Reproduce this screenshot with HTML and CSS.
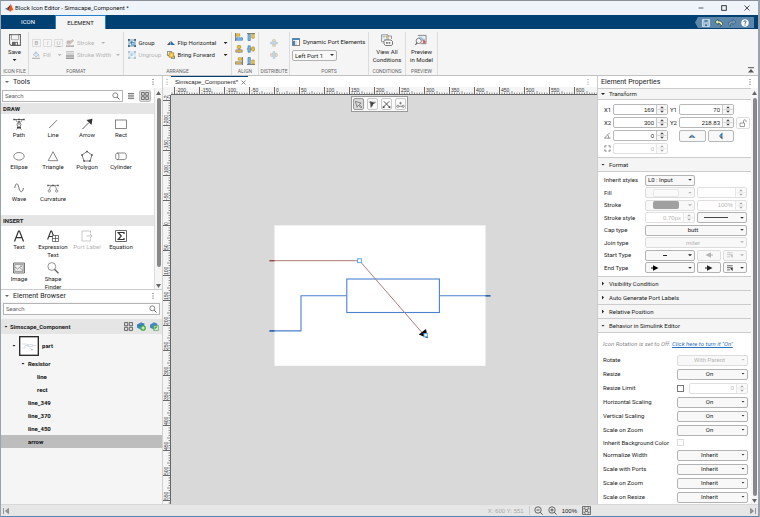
FILE: index.html
```html
<!DOCTYPE html>
<html lang="en">
<head>
<meta charset="utf-8">
<title>Block Icon Editor - Simscape_Component *</title>
<link rel="stylesheet" href="styles.css">
</head>
<body>
<svg class="defs" aria-hidden="true">
  <defs>
    <symbol id="search" viewBox="0 0 9 9"><circle cx="3.7" cy="3.7" r="2.8" fill="none" stroke="#555" stroke-width=".8"/><path d="M5.8 5.8L8.4 8.4" stroke="#555" stroke-width="1.1"/></symbol>
    <symbol id="dots" viewBox="0 0 2 6"><path d="M.5 0h1v1h-1zM.5 2.4h1v1h-1zM.5 4.8h1v1h-1z" fill="#555"/></symbol>
    <symbol id="grid4" viewBox="0 0 8 8"><path d="M.5.5h2.8v2.8H.5zM4.7.5h2.8v2.8H4.7zM.5 4.7h2.8v2.8H.5zM4.7 4.7h2.8v2.8H4.7z" fill="none" stroke="#555" stroke-width=".8"/></symbol>
    <symbol id="spin" viewBox="0 0 10 10"><path d="M0 5h10" stroke="#bbb" stroke-width=".6"/><path d="M3 3.600L5 1.300l2 2.300zM3 6.400L5 8.700l2-2.300z" fill="#444"/></symbol>
    <symbol id="arrowhead" viewBox="0 0 8 6"><path d="M0 2.500h2V.2L7.500 3 2 5.800V3.500H0z" fill="currentColor"/></symbol>
    <symbol id="lines" viewBox="0 0 8 8"><path d="M0 1h7.500M0 3.500h6M0 6.500h4" stroke="currentColor" stroke-width=".9" fill="none"/><path d="M4.500 5l3-2.500V8z" fill="currentColor"/></symbol>
  </defs>
</svg>

<header class="titlebar">
  <svg class="logo" viewBox="0 0 9 8"><path d="M0 4.7L3 3.2 4.3 5 2.6 6.3z" fill="#3f7fb5"/><path d="M3 3.2C4.3 2.7 4.8.5 5.7.2L4.5 5.6 2.8 6.2z" fill="#8c2b1c"/><path d="M5.7.2C6.8 1 7.4 5 9 6.5 7.3 5.7 6.4 6.3 5 8 4.5 7 4 6.4 2.8 6.3 4.5 5.4 5 2 5.7.2z" fill="#dc5a26"/></svg>
  <h1>Block Icon Editor - Simscape_Component *</h1>
  <div class="winbuttons">
    <button aria-label="Minimize"><svg viewBox="0 0 6 6"><path d="M.5 3h5" stroke="#222" stroke-width=".7"/></svg></button>
    <button aria-label="Maximize"><svg viewBox="0 0 6 6"><rect x=".7" y=".7" width="4.600" height="4.600" fill="none" stroke="#222" stroke-width=".9"/></svg></button>
    <button aria-label="Close"><svg viewBox="0 0 6 6"><path d="M.5.5l5 5M5.500.5l-5 5" stroke="#222" stroke-width=".8"/></svg></button>
  </div>
</header>

<nav class="tabs">
  <button class="tab">ICON</button>
  <button class="tab active">ELEMENT</button>
  <div class="quick">
    <button aria-label="Save"><svg viewBox="0 0 8 8"><path d="M.5.5h7v7h-7z" fill="#9dbad3" stroke="#dce8f2" stroke-width=".8"/><path d="M2 .8h4v2.400H2zM2.500 5h3v2.500h-3z" fill="#40719c" stroke="#e5eef5" stroke-width=".5"/></svg></button>
    <button aria-label="Undo"><svg viewBox="0 0 8 8"><path d="M0 3L3 .3v1.500c3 0 4.700 1.500 4.700 3.700L5.500 7.600C6 5.300 5 4.200 3 4.200v1.500z" fill="#e2edb0" stroke="#263f48" stroke-width=".7"/></svg></button>
    <button aria-label="Redo"><svg viewBox="0 0 8 8"><path d="M8 3L5 .3v1.500C2 1.800.3 3.300.3 5.500l2.200 2.100C2 5.300 3 4.200 5 4.200v1.500z" fill="#7e9cb4" stroke="#375f80" stroke-width=".7"/></svg></button>
    <button aria-label="Help"><svg viewBox="0 0 8 8"><circle cx="4" cy="4" r="3.700" fill="#fff"/><path d="M2.900 3c0-1.600 2.400-1.500 2.200-.1C5 3.600 4 3.800 4 4.800M4 5.500v1" fill="none" stroke="#16486f" stroke-width=".9"/></svg></button>
  </div>
</nav>

<section class="ribbon" aria-label="Ribbon">
  <div class="group file">
    <button class="big"><svg viewBox="0 0 12 12"><path d="M.6.6h10.800v10.800H2.200L.6 9.800z" fill="#fff" stroke="#666" stroke-width="1.100"/><path d="M2.500.8h7v5h-7z" fill="#f3f3f3" stroke="#777" stroke-width=".6"/><path d="M3 7.800h6v3.500H3z" fill="#666"/><path d="M6.700 8.700h1.200v2H6.700z" fill="#fff"/></svg><span>Save</span><i class="caret"></i></button>
    <h2>ICON FILE</h2>
  </div>
  <div class="group format">
    <div class="formatgrid">
      <div class="biu"><button disabled><b>B</b></button><button disabled><em>I</em></button><button disabled><u>U</u></button></div>
      <button class="cmd" disabled><svg viewBox="0 0 8 8"><path d="M0 6.700h8V8H0zM1 5.500V2h4" fill="#c7bcbc" stroke="#aaa" stroke-width=".6"/><path d="M2.500 5.500L3 3.800 6.400.5 7.600 1.700 4.200 5z" fill="#e4c1aa" stroke="#b1a5a0" stroke-width=".5"/></svg>Stroke<i class="caret wide"></i></button>
      <button class="cmd" disabled><svg viewBox="0 0 8 8"><path d="M0 6.700h8V8H0z" fill="#bbb"/><path d="M1.200 3.500L4 .8l2.700 2.800L4 5.900zM4 .8V3M6.700 3.600v2.200" fill="#dbeaf5" stroke="#99b0c0" stroke-width=".6"/></svg>Fill<i class="caret wide"></i></button>
      <button class="cmd" disabled><svg viewBox="0 0 8 8"><path d="M0 .8h8M0 3h8" stroke="#aaa" stroke-width=".9"/><path d="M0 4.200h8v1.500H0zM0 6.500h8V8H0z" fill="#999"/></svg>Stroke Width<i class="caret"></i></button>
    </div>
    <h2>FORMAT</h2>
  </div>
  <div class="group arrange">
    <div class="arrangegrid">
      <button class="cmd"><svg viewBox="0 0 8 8"><rect x="1" y="1" width="6" height="6" fill="#e6f1fa" stroke="#39617e" stroke-width=".6"/><circle cx="3.600" cy="3.500" r="1.500" fill="#4b95cc"/><rect x="3.500" y="3.500" width="2.500" height="2.500" fill="#bddcf2" stroke="#2271a8" stroke-width=".5"/><path d="M0 0h1.800v1.800H0zM6.200 0H8v1.800H6.200zM0 6.200h1.800V8H0zM6.200 6.200H8V8H6.200z" fill="#39617e"/></svg>Group</button>
      <button class="cmd"><svg viewBox="0 0 8 8"><path d="M0 6L3.500 2v4z" fill="#555"/><path d="M4 2l4 4H4z" fill="#1975c1"/></svg>Flip Horizontal<i class="caret end"></i></button>
      <button class="cmd" disabled><svg viewBox="0 0 8 8"><rect x="1" y="1" width="6" height="6" fill="#f0f6fa" stroke="#b1cbdc" stroke-width=".6"/><circle cx="3.600" cy="3.500" r="1.500" fill="#b1d2e9"/><path d="M1 7L7 1M0 0h1.800v1.800H0zM6.200 0H8v1.800H6.200zM0 6.200h1.800V8H0zM6.200 6.200H8V8H6.200z" fill="#aac3d4" stroke="#9abddb" stroke-width=".3"/></svg>Ungroup</button>
      <button class="cmd"><svg viewBox="0 0 8 8"><path d="M.4.4h4v4h-4zM4.500 5h3v2.600h-3z" fill="#fff" stroke="#555" stroke-width=".7"/><path d="M2 1.800h4.700v4.400H2z" fill="#f5d35a" stroke="#a77c10" stroke-width=".7"/></svg>Bring Forward<i class="caret end"></i></button>
    </div>
    <h2>ARRANGE</h2>
  </div>
  <div class="group align">
    <div class="aligngrid">
      <button aria-label="Align left"><svg viewBox="0 0 8 8"><path d="M.4 0v8" stroke="#555" stroke-width=".8"/><path d="M1.200.8h3.500v2.400H1.200z" fill="#f5cf50" stroke="#a6800f" stroke-width=".6"/><path d="M1.200 4.800h6.300v2.400H1.200z" fill="#86b8e6" stroke="#2b6da8" stroke-width=".6"/></svg></button>
      <button aria-label="Align top"><svg viewBox="0 0 8 8"><path d="M0 .4h8" stroke="#555" stroke-width=".8"/><path d="M1 1.200h2.300v6.300H1z" fill="#86b8e6" stroke="#2b6da8" stroke-width=".6"/><path d="M4.800 1.200h2.400v4H4.800z" fill="#f5cf50" stroke="#a6800f" stroke-width=".6"/></svg></button>
      <button aria-label="Align center"><svg viewBox="0 0 8 8"><path d="M4 0v8" stroke="#555" stroke-width=".8"/><path d="M2.300.8h3.500v2.400H2.300z" fill="#f5cf50" stroke="#a6800f" stroke-width=".6"/><path d="M.8 4.800h6.400v2.400H.8z" fill="#e4bd58" stroke="#6b6d78" stroke-width=".6"/></svg></button>
      <button aria-label="Align middle"><svg viewBox="0 0 8 8"><path d="M0 4h8" stroke="#555" stroke-width=".8"/><path d="M1 .8h2.300v6.400H1z" fill="#86b8e6" stroke="#2b6da8" stroke-width=".6"/><path d="M4.800 2h2.400v4H4.800z" fill="#f5cf50" stroke="#a6800f" stroke-width=".6"/></svg></button>
      <button aria-label="Align right"><svg viewBox="0 0 8 8"><path d="M7.600 0v8" stroke="#555" stroke-width=".8"/><path d="M3.300.8h3.500v2.400H3.300z" fill="#f5cf50" stroke="#a6800f" stroke-width=".6"/><path d="M.5 4.800h6.300v2.400H.5z" fill="#e4bd58" stroke="#6b6d78" stroke-width=".6"/></svg></button>
      <button aria-label="Align bottom"><svg viewBox="0 0 8 8"><path d="M0 7.600h8" stroke="#555" stroke-width=".8"/><path d="M1 .5h2.300v6.300H1z" fill="#86b8e6" stroke="#2b6da8" stroke-width=".6"/><path d="M4.800 3h2.400v3.800H4.800z" fill="#f5cf50" stroke="#a6800f" stroke-width=".6"/></svg></button>
    </div>
    <h2>ALIGN</h2>
  </div>
  <div class="group distribute">
    <div class="stack">
      <button disabled aria-label="Distribute vertically"><svg viewBox="0 0 8 8"><path d="M0 4h8M4 0v8" stroke="#bbb" stroke-width=".8"/><path d="M2.500.8h3v2h-3zM2.500 5.200h3v2h-3z" fill="#e6dcc2" stroke="#c8bba0" stroke-width=".5"/><path d="M.8 3h6.400v2H.8z" fill="#c5d9ea" stroke="#a9c1d8" stroke-width=".5"/></svg></button>
      <button disabled aria-label="Distribute horizontally"><svg viewBox="0 0 8 8"><path d="M0 4h8M4 0v8" stroke="#bbb" stroke-width=".8"/><path d="M.8 2.500h2v3h-2zM5.200 2.500h2v3h-2z" fill="#e6dcc2" stroke="#c8bba0" stroke-width=".5"/><path d="M3 .8h2v6.400H3z" fill="#c5d9ea" stroke="#a9c1d8" stroke-width=".5"/></svg></button>
    </div>
    <h2>DISTRIBUTE</h2>
  </div>
  <div class="group ports">
    <button class="cmd"><svg viewBox="0 0 8 8"><path d="M.4.4h7.200v7.200H.4z" fill="#fff" stroke="#555" stroke-width=".8"/><path d="M.4.4h7.200v1.500H.4zM.8 2.800H3v4.500H.8z" fill="#3b8ac9"/><path d="M4 3v4.500M2 3v4.500" stroke="#777" stroke-width=".5"/></svg>Dynamic Port Elements</button>
    <span class="select portselect"><select aria-label="Port"><option>Left Port 1</option></select></span>
    <h2>PORTS</h2>
  </div>
  <div class="group conditions">
    <button class="big two"><svg viewBox="0 0 12 12"><path d="M.5.800h6.500v7H.5zM7 2h3.500v3" fill="#eee" stroke="#777" stroke-width=".7"/><path d="M1.500 2h3v1.500h-3zM3 5h3v1.500H3z" fill="#a8c5dc"/><path d="M5 1l1.500 2L5 5z" fill="#e5b22e"/><path d="M4.500 6h5.500l1.500 1.500v3L10 11.500H4.500L3 10V7.500z" fill="#fff" stroke="#555" stroke-width=".8"/><path d="M5 9.700V8h1.800v1.700zM7.600 9.700V8h1.800v1.700z" fill="#777"/></svg><span>View All<br>Conditions</span></button>
    <h2>CONDITIONS</h2>
  </div>
  <div class="group preview">
    <button class="big two"><svg viewBox="0 0 13 12"><path d="M3 1h9v9H6" fill="#eef3f7" stroke="#666" stroke-width=".8"/><path d="M4.500 3h3v2h-3zM8 5h2v1.500H8z" fill="#fff" stroke="#4e8fc5" stroke-width=".6"/><path d="M8.800 5.500L11.300 7v2l-2.500 1.200z" fill="#d9534a"/><circle cx="4" cy="7" r="2.800" fill="#fff" stroke="#555" stroke-width=".8"/><path d="M2.200 9L.5 11.300" stroke="#555" stroke-width="1.100"/></svg><span>Preview<br>in Model</span></button>
    <h2>PREVIEW</h2>
  </div>
  <button class="collapse" aria-label="Collapse ribbon"><svg viewBox="0 0 6 6"><path d="M0 .7h6" stroke="#555"/><path d="M0 5.500L3 2l3 3.500z" fill="#555"/></svg></button>
</section>

<main class="main">
  <aside class="left">
    <section class="tools">
      <h3><i class="caret"></i>Tools<svg><use href="#dots"/></svg></h3>
      <div class="toolscroll">
        <div class="toollist">
          <div class="searchrow">
            <label class="search"><input type="text" placeholder="Search" aria-label="Search tools"><svg><use href="#search"/></svg></label>
            <button class="view" aria-label="List view"><svg viewBox="0 0 8 8"><path d="M1 1.500h6M1 3.200h6M1 4.900h6M1 6.600h6" stroke="#555" stroke-width=".8"/></svg></button>
            <button class="view on" aria-label="Grid view"><svg><use href="#grid4"/></svg></button>
          </div>
          <h4>DRAW</h4>
          <div class="palette draw">
            <button><svg viewBox="0 0 12 12"><path d="M1 1.500h10M3 1c0 2 1 3 1.500 3M9 1C9 3 8 4 7.500 4M6 3L4 6.500 5 9h2l1-2.500zM6 3v4" fill="none" stroke="#444" stroke-width=".7"/><path d="M.3.8h1.500v1.500H.3zM5.200.8h1.600v1.500H5.200zM10.200.8h1.500v1.500h-1.500zM4 9h4v1.200H4z" fill="#444"/><path d="M3.500 11.500L5 10h2l1.500 1.500" fill="none" stroke="#444" stroke-width=".7"/></svg>Path</button>
            <button><svg viewBox="0 0 12 12"><path d="M2.200 10L10 2.200" stroke="#555" stroke-width=".8"/></svg>Line</button>
            <button><svg viewBox="0 0 12 12"><path d="M1.500 11L8 4.500" stroke="#333" stroke-width=".8"/><path d="M11.500.8L10.500 7 5.500 2z" fill="#333"/></svg>Arrow</button>
            <button><svg viewBox="0 0 12 12"><rect x=".5" y="2" width="11" height="8.500" fill="none" stroke="#555" stroke-width=".7"/></svg>Rect</button>
            <button><svg viewBox="0 0 12 12"><ellipse cx="6" cy="6.300" rx="5.200" ry="3.800" fill="none" stroke="#555" stroke-width=".7"/></svg>Ellipse</button>
            <button><svg viewBox="0 0 12 12"><path d="M6 1.700l4.800 9H1.200z" fill="none" stroke="#555" stroke-width=".7"/></svg>Triangle</button>
            <button><svg viewBox="0 0 12 12"><path d="M6 1.500l5 3.500-2 6H3L1 5z" fill="none" stroke="#444" stroke-width=".7"/><path d="M5.300.8h1.400v1.400H5.300zM10.300 4.300h1.400v1.400h-1.400zM8.300 10.300h1.400v1.400H8.300zM2.300 10.300h1.400v1.400H2.300zM.3 4.300h1.400v1.400H.3z" fill="#444"/></svg>Polygon</button>
            <button><svg viewBox="0 0 12 12"><path d="M2.300 3h7.400c2.200 0 2.200 6.600 0 6.600H2.300C0 9.600 0 3 2.300 3c2.200 0 2.200 6.600 0 6.600" fill="none" stroke="#555" stroke-width=".7"/></svg>Cylinder</button>
            <button><svg viewBox="0 0 12 12"><path d="M1.800 6C2.500 0 5 1 5.800 5.500S9.300 12 10.500 6" fill="none" stroke="#555" stroke-width=".8"/></svg>Wave</button>
            <button><svg viewBox="0 0 12 12"><path d="M1 3.400h10M2.500 9c0-4 1.500-5.500 3.500-5.500S9.500 5 9.500 9" fill="none" stroke="#555" stroke-width=".7"/><path d="M.2 2.700h1.500v1.500H.2zM5.200 2.700h1.500v1.500H5.200zM10.300 2.700h1.500v1.500h-1.500z" fill="#555"/><circle cx="2.300" cy="9" r="1.200" fill="#fff" stroke="#555" stroke-width=".6"/><circle cx="9.700" cy="9" r="1.200" fill="#fff" stroke="#555" stroke-width=".6"/></svg>Curvature</button>
          </div>
          <h4>INSERT</h4>
          <div class="palette insert">
            <button><svg viewBox="0 0 12 12"><path d="M1.500 11.500L5.500 1h1l4 10.500M3 7.700h6" fill="none" stroke="#333" stroke-width="1.200"/></svg>Text</button>
            <button><svg viewBox="0 0 12 12"><path d="M.6 9.500L3.800 1h.8l2 5M1.800 6.500h4" fill="none" stroke="#333" stroke-width="1.100"/><path d="M5.500 5.500h6v6h-6zM8.500 5.500v6M5.500 8.500h6" fill="#fff" stroke="#444" stroke-width=".7"/></svg>Expression Text</button>
            <button disabled><svg viewBox="0 0 12 12"><path d="M9.500 3.500V1H1v10h8.500V8.500M5.500 5.900H11M9 4l2 1.900L9 8" fill="none" stroke="#bbb" stroke-width=".8"/></svg>Port Label</button>
            <button><svg viewBox="0 0 12 12"><path d="M.5.5h11v11H.5z" fill="#fff" stroke="#444" stroke-width=".8"/><path d="M9 4V2.500H3.200L6.200 6 3.200 9.500H9V8" fill="none" stroke="#333" stroke-width="1.200"/></svg>Equation</button>
            <button><svg viewBox="0 0 12 12"><path d="M.5 1h11v10H.5z" fill="#eee" stroke="#555" stroke-width=".8"/><path d="M1.800 2.400h8.400v7H1.800zM2 5l2.500 2 2-1.500L10 8.500" fill="none" stroke="#666" stroke-width=".6"/><circle cx="8" cy="4.300" r=".8" fill="#666"/></svg>Image</button>
            <button><svg viewBox="0 0 12 12"><circle cx="4.800" cy="4.500" r="3.900" fill="none" stroke="#666" stroke-width=".7"/><path d="M7.500 7.200l4 4" stroke="#666" stroke-width="1.500"/></svg>Shape Finder</button>
          </div>
        </div>
        <div class="bar" aria-hidden="true"><i class="up"></i><i class="thumb"></i><i class="down"></i></div>
      </div>
    </section>
    <section class="browser">
      <h3><i class="caret"></i>Element Browser<svg><use href="#dots"/></svg></h3>
      <label class="search"><input type="text" placeholder="Search" aria-label="Search elements"><svg><use href="#search"/></svg></label>
      <div class="root"><i class="caret"></i><span>Simscape_Component</span>
        <button aria-label="Grid"><svg><use href="#grid4"/></svg></button>
        <button aria-label="Add element"><svg viewBox="0 0 8 8"><path d="M0 2.500L3.500.3 6.500 1.500v3L3 6.500 0 5z" fill="#4388c4"/><path d="M0 2.500L3 3.500 6.500 1.500" stroke="#285d8c" stroke-width=".5" fill="none"/><circle cx="5.400" cy="5.300" r="2.500" fill="#3fac3c"/><path d="M5.400 3.800v3M3.900 5.300h3" stroke="#fff" stroke-width=".8"/></svg></button>
        <button aria-label="Copy element"><svg viewBox="0 0 8 8"><path d="M0 2.500L3.500.3 6.500 1.500v3L3 6.500 0 5z" fill="#4388c4"/><path d="M3.200 3.200h4.300v4.300H3.200z" fill="#dff0df" stroke="#398b3c" stroke-width=".5"/><path d="M4 4h3L4 7z" fill="#3fac3c"/></svg></button>
      </div>
      <ul class="tree">
        <li class="d1 part"><i class="caret"></i><svg viewBox="0 0 20 20"><rect x=".7" y=".7" width="18.600" height="18.600" fill="#fff" stroke="#222" stroke-width="1.300"/><path d="M3 8h5l5 6M3 12h3V9.500h2.500v-1h5v2h-5v-1M13.500 9.500H17" fill="none" stroke="#c4cde0" stroke-width=".6"/><path d="M12.500 13.200h1v1h-1z" fill="#777"/></svg>part</li>
        <li class="d2"><i class="caret"></i>Resistor</li>
        <li class="d3">line</li>
        <li class="d3">rect</li>
        <li class="leaf">line_349</li>
        <li class="leaf">line_370</li>
        <li class="leaf">line_450</li>
        <li class="leaf selected">arrow</li>
      </ul>
    </section>
  </aside>

  <section class="center">
    <div class="doctabs"><svg><use href="#dots"/></svg><button class="doctab">Simscape_Component*<svg class="x" viewBox="0 0 5 5"><path d="M.5.5l4 4M4.500.5l-4 4" stroke="#555" stroke-width=".7"/></svg></button><svg class="more"><use href="#dots"/></svg></div>
    <svg class="hruler">
      <defs><pattern id="ht" x="3" y="0" width="25" height="8" patternUnits="userSpaceOnUse"><path d="M.5 0v8" stroke="#444" stroke-width=".8"/><path d="M3 5.500V8M5.500 5.500V8M8 5.500V8M10.500 5.500V8M13 4V8M15.500 5.500V8M18 5.500V8M20.500 5.500V8M23 5.500V8" stroke="#666" stroke-width=".7"/></pattern></defs>
      <rect width="100%" height="8" fill="url(#ht)"/><path class="edge" d="M0 7.500h4000"/>
      <text x="5" y="5">-200</text><text x="30" y="5">-150</text><text x="55" y="5">-100</text><text x="80" y="5">-50</text><text x="105" y="5">0</text><text x="130" y="5">50</text><text x="155" y="5">100</text><text x="180" y="5">150</text><text x="205" y="5">200</text><text x="230" y="5">250</text><text x="255" y="5">300</text><text x="280" y="5">350</text><text x="305" y="5">400</text><text x="330" y="5">450</text><text x="355" y="5">500</text><text x="380" y="5">550</text><text x="405" y="5">600</text>
    </svg>
    <svg class="vruler">
      <defs><pattern id="vt" x="0" y="5" width="8" height="25" patternUnits="userSpaceOnUse"><path d="M0 .5h8" stroke="#444" stroke-width=".8"/><path d="M5.500 3H8M5.500 5.500H8M5.500 8H8M5.500 10.500H8M4 13H8M5.500 15.500H8M5.500 18H8M5.500 20.500H8M5.500 23H8" stroke="#666" stroke-width=".7"/></pattern></defs>
      <rect width="8" height="100%" fill="url(#vt)"/><path class="edge" d="M7.500 0v4000"/>
      <g transform="rotate(-90)"><text x="-5" y="5">-250</text><text x="-30" y="5">-200</text><text x="-55" y="5">-150</text><text x="-80" y="5">-100</text><text x="-105" y="5">-50</text><text x="-130" y="5">0</text><text x="-155" y="5">50</text><text x="-180" y="5">100</text><text x="-205" y="5">150</text><text x="-230" y="5">200</text><text x="-255" y="5">250</text><text x="-280" y="5">300</text><text x="-305" y="5">350</text><text x="-330" y="5">400</text><text x="-355" y="5">450</text><text x="-380" y="5">500</text><text x="-405" y="5">550</text></g>
    </svg>
    <div class="workspace">
      <svg class="drawing" role="img" aria-label="Variable resistor icon">
        <rect x="103.500" y="130.400" width="211" height="140.400" fill="#fff"/>
        <g fill="none" stroke="#4a80d0" stroke-width="1.100"><rect x="175.800" y="184" width="92.600" height="33.500"/><path d="M175.800 200.800H130V235.900H98.500M268.400 200.800h51"/></g>
        <path d="M98.500 235.900h5M314.500 200.800h5" stroke="#24589c" stroke-width="1.300"/>
        <path d="M98.500 165.700H188.500L254 241" fill="none" stroke="#b07b76" stroke-width="1"/>
        <path d="M98.500 165.700h5" stroke="#8d4a45" stroke-width="1.300"/>
        <path d="M247.800 239.500l7.200-5.500 1.800 9.300z" fill="#000"/>
        <rect x="186.600" y="163.800" width="3.800" height="3.800" fill="#fff" stroke="#59ade8" stroke-width="1"/>
        <rect x="253" y="238.500" width="3.300" height="3.300" fill="#fff" stroke="#59ade8" stroke-width="1"/>
      </svg>
      <div class="floatbar">
        <button class="on" aria-label="Select"><svg viewBox="0 0 10 10"><path d="M1.500 1.500l6.500 2-2.300 1.500L8.800 8 8 8.800 5 5.700 3.500 8z" fill="none" stroke="#666" stroke-width=".8"/></svg></button>
        <button aria-label="Edit nodes"><svg viewBox="0 0 10 10"><path d="M2 1.500l6 1.700-2.300 1.500L4 8.500z" fill="#444"/><path d="M1 2.500h8M3 8.500V2" stroke="#555" stroke-width=".7"/></svg></button>
        <button class="sep" aria-label="Break"><svg viewBox="0 0 10 10"><path d="M2 1.500l6 6M8 1.500l-6 6" stroke="#444" stroke-width="1"/><path d="M.8 7h2v2h-2zM7.300 7h2v2h-2z" fill="#444"/></svg></button>
        <button aria-label="Join"><svg viewBox="0 0 10 10"><path d="M3.500 3.500h3M5 2v3M3 7h4" stroke="#666" stroke-width=".8"/><circle cx="2" cy="7" r="1.200" fill="none" stroke="#555" stroke-width=".7"/><circle cx="8" cy="7" r="1.200" fill="none" stroke="#555" stroke-width=".7"/></svg></button>
      </div>
    </div>
  </section>

  <aside class="right">
    <h3>Element Properties<svg><use href="#dots"/></svg></h3>
    <div class="propscroll">
      <div class="props">
        <h4 class="first"><i class="caret"></i>Transform</h4>
        <div class="transform">
          <label for="x1">X1</label><span class="spin"><input id="x1" value="169"><svg><use href="#spin"/></svg></span>
          <label for="y1">Y1</label><span class="spin"><input id="y1" value="70"><svg><use href="#spin"/></svg></span><span></span>
          <label for="x2">X2</label><span class="spin"><input id="x2" value="300"><svg><use href="#spin"/></svg></span>
          <label for="y2">Y2</label><span class="spin"><input id="y2" value="218.83"><svg><use href="#spin"/></svg></span>
          <button class="lock" aria-label="Lock" disabled><svg viewBox="0 0 8 8"><path d="M1 4h4.500v3.500H1zM4.500 4V2c0-1.700 2.600-1.700 2.600 0v1" fill="none" stroke="#777" stroke-width=".7"/></svg></button>
          <label for="ang"><svg viewBox="0 0 8 8"><path d="M7.500 7H.5L6.500.8M4 3.200c1.200.8 1.500 2 1.300 3.800" fill="none" stroke="#555" stroke-width=".7"/></svg></label><span class="spin"><input id="ang" value="0" aria-label="Angle"><svg><use href="#spin"/></svg></span>
          <span></span>
          <div class="flips"><button aria-label="Flip horizontal"><svg viewBox="0 0 8 8"><path d="M.5 5.800L3.700 2.500v3.300z" fill="#555"/><path d="M4.300 2.500l3.200 3.300H4.300z" fill="#1975c1"/></svg></button><button aria-label="Flip vertical"><svg viewBox="0 0 8 8"><path d="M5.500.5v3.200H2z" fill="#1975c1"/><path d="M5.500 4.300v3.200L2 4.300z" fill="#456"/></svg></button></div><span></span>
          <label for="rad"><svg viewBox="0 0 8 8"><path d="M1 3V1h2M5 1h2v2M7 5v2H5M3 7H1V5" fill="none" stroke="#555" stroke-width=".8"/></svg></label><span class="spin off"><input id="rad" value="0" disabled aria-label="Corner radius"><svg><use href="#spin"/></svg></span>
        </div>
        <h4><i class="caret"></i>Format</h4>
        <div class="formatrows">
          <div><label for="inh">Inherit styles</label><span class="select l"><select id="inh"><option>L0 : Input</option></select></span></div>
          <div><label for="fill">Fill</label><button id="fill" class="pick" disabled><i class="swatch white"></i><i class="caret"></i></button><span class="spin off"><input disabled aria-label="Fill opacity"><svg><use href="#spin"/></svg></span></div>
          <div><label for="stroke">Stroke</label><button id="stroke" class="pick" disabled><i class="swatch"></i><i class="caret"></i></button><span class="spin off"><input value="100%" disabled aria-label="Stroke opacity"><svg><use href="#spin"/></svg></span></div>
          <div><label for="ss">Stroke style</label><span class="spin off"><input id="ss" value="0.70px" disabled><svg><use href="#spin"/></svg></span><button class="pick" aria-label="Line pattern"><i class="rule"></i><i class="caret"></i></button></div>
          <div><label for="cap">Cap type</label><span class="select"><select id="cap"><option>butt</option></select></span></div>
          <div><label for="join">Join type</label><span class="select off"><select id="join" disabled><option>miter</option></select></span></div>
          <div><label for="st">Start Type</label><button id="st" class="pick"><i class="dash"></i><i class="caret"></i></button><button class="half" disabled aria-label="Start arrow"><svg class="flip"><use href="#arrowhead"/></svg></button><button class="half" disabled aria-label="Start position"><svg><use href="#lines"/></svg><i class="caret"></i></button></div>
          <div><label for="et">End Type</label><button id="et" class="pick end"><svg><use href="#arrowhead"/></svg><i class="caret"></i></button><button class="half" aria-label="End arrow"><svg><use href="#arrowhead"/></svg></button><button class="half" aria-label="End position"><svg><use href="#lines"/></svg><i class="caret"></i></button></div>
        </div>
        <h4 class="shut"><i class="caret"></i>Visibility Condition</h4>
        <h4 class="shut"><i class="caret"></i>Auto Generate Port Labels</h4>
        <h4 class="shut"><i class="caret"></i>Relative Position</h4>
        <h4><i class="caret"></i>Behavior in Simulink Editor</h4>
        <div class="behavior">
          <p>Icon Rotation is set to Off. <a href="#">Click here to turn it "On"</a></p>
          <div><label for="b1">Rotate</label><span class="select off"><select id="b1" disabled><option>With Parent</option></select></span></div>
          <div><label for="b2">Resize</label><span class="select"><select id="b2"><option>On</option></select></span></div>
          <div><label for="b3">Resize Limit</label><span class="limit"><input type="checkbox" id="b3"><span class="spin off"><input value="0" disabled aria-label="Limit"><svg><use href="#spin"/></svg></span></span></div>
          <div><label for="b4">Horizontal Scaling</label><span class="select"><select id="b4"><option>On</option></select></span></div>
          <div><label for="b5">Vertical Scaling</label><span class="select"><select id="b5"><option>On</option></select></span></div>
          <div><label for="b6">Scale on Zoom</label><span class="select"><select id="b6"><option>On</option></select></span></div>
          <div class="short"><label for="b7">Inherit Background Color</label><span class="limit"><input type="checkbox" id="b7" disabled></span></div>
          <div><label for="b8">Normalize Width</label><span class="select"><select id="b8"><option>Inherit</option></select></span></div>
          <div><label for="b9">Scale with Ports</label><span class="select"><select id="b9"><option>Inherit</option></select></span></div>
          <div><label for="b10">Scale on Zoom</label><span class="select"><select id="b10"><option>Inherit</option></select></span></div>
          <div><label for="b11">Scale on Resize</label><span class="select"><select id="b11"><option>Inherit</option></select></span></div>
        </div>
      </div>
      <div class="bar" aria-hidden="true"><i class="up"></i><i class="thumb long"></i><i class="down"></i></div>
    </div>
  </aside>
</main>

<footer class="status">
  <button aria-label="Collapse left panel"><svg viewBox="0 0 6 6"><path d="M.5 0v6M5.500.5L2.500 3l3 2.500z" fill="#999" stroke="#777" stroke-width=".7"/></svg></button>
  <div class="zoomset">
    <output>X: 600 Y: 551</output>
    <button class="bl" aria-label="Zoom out"><svg viewBox="0 0 9 9"><circle cx="4" cy="4" r="3.200" fill="none" stroke="#444" stroke-width=".8"/><path d="M2.500 4h3M6.300 6.300l2.300 2.300" stroke="#444" stroke-width=".9"/></svg></button>
    <button aria-label="Zoom in"><svg viewBox="0 0 9 9"><circle cx="4" cy="4" r="3.200" fill="none" stroke="#444" stroke-width=".8"/><path d="M2.500 4h3M4 2.500v3M6.300 6.300l2.300 2.300" stroke="#444" stroke-width=".9"/></svg></button>
    <span>100%</span>
    <button aria-label="Fit to view"><svg viewBox="0 0 9 9"><path d="M.5.5h8v8h-8z" fill="#ddd" stroke="#555" stroke-width=".8"/><path d="M2 3.500V2h1.500M5.500 2H7v1.500M7 5.500V7H5.500M3.500 7H2V5.500M3.500 3.500h2v2h-2z" fill="none" stroke="#444" stroke-width=".7"/></svg></button>
  </div>
  <button class="tail" aria-label="Collapse right panel"><svg viewBox="0 0 6 6"><path d="M5.500 0v6M.5.5L3.500 3l-3 2.500z" fill="#999" stroke="#777" stroke-width=".7"/></svg></button>
</footer>
</body>
</html>
```
FILE: styles.css
```css
* { box-sizing: border-box; }

body {
  margin: 0;
  height: 100vh;
  display: flex;
  flex-direction: column;
  overflow: hidden;
  border: 1px solid #98a3b0;
  border-top-color: #8b8f98;
  border-bottom-color: #5c84a8;
  border-right-width: 2px;
  background: #f5f5f5;
  color: #222;
  font: 6px/8px Roboto, "Open Sans", sans-serif;
}

.defs { position: absolute; width: 0; height: 0; }
svg { display: block; flex: none; }
h1, h2, h3, h4, p, ul { margin: 0; padding: 0; font-weight: normal; }
button, input, select { margin: 0; padding: 0; border: 0; background: none; color: inherit; font: inherit; }
button { display: flex; align-items: center; justify-content: center; }
button:disabled { color: #b5b5b5; }
label { min-width: 0; white-space: nowrap; }

.caret {
  width: 4px;
  height: 2px;
  flex: none;
  background: currentColor;
  clip-path: polygon(0 0, 100% 0, 50% 100%);
}

/* Title bar */
.titlebar { flex: none; height: 14px; display: flex; align-items: center; padding: 0 8px 0 4px; background: #eff4fb; color: #111; }
.logo { width: 9px; height: 8px; }
.titlebar h1 { flex: 1; margin-left: 1px; font-size: 6px; line-height: 8px; }
.winbuttons { display: flex; gap: 17px; }
.winbuttons svg { width: 6px; height: 6px; }

/* Tabs */
.tabs { flex: none; height: 14px; display: flex; background: #004073; color: #fff; }
.tab { width: 54px; }
.tab.active { width: 51px; background: #f5f5f5; color: #222; border: 1px solid #2280cc; border-width: 1px 1px 0; }
.quick { display: flex; align-items: center; gap: 5px; margin: 2px 4px 1px auto; padding: 0 5px 0 7px; background: #5c87ab; clip-path: polygon(3px 0, 100% 0, 100% 100%, 3px 100%, 0 50%); }
.quick svg { width: 8px; height: 8px; }

/* Ribbon */
.ribbon { flex: none; height: 47px; display: flex; padding-top: 3px; border-bottom: 1px solid #c2c2c2; }
.group { display: flex; flex-direction: column; align-items: center; border-right: 1px solid #dcdcdc; }
.group h2 { margin-top: auto; color: #666; font-size: 5px; line-height: 8px; white-space: nowrap; }
.file { width: 28px; }
.format { width: 95px; }
.arrange { width: 108px; }
.align { width: 27px; }
.distribute { width: 31px; }
.ports { width: 79px; }
.conditions { width: 37px; }
.preview { width: 32px; }
.big { flex-direction: column; }
.big svg { width: 12px; height: 12px; margin: 2px 0; }
.big .caret { margin-top: 3px; }
.cmd { gap: 3px; justify-content: flex-start; white-space: nowrap; }
.cmd svg { width: 8px; height: 8px; }
.cmd .caret { margin-left: 2px; }
.cmd .caret.wide { margin-left: 4px; }
.cmd .caret.end { margin-left: auto; }
.formatgrid { display: grid; grid-template-columns: 32px 54px; gap: 4px 2px; margin-top: 7px; }
.biu { display: flex; gap: 2px; }
.biu button { width: 9px; height: 8px; border: 1px solid #ddd; }
.arrangegrid { display: grid; grid-template-columns: 37px 61px; gap: 4px 2px; margin-top: 7px; }
.aligngrid { display: grid; grid-template-columns: 8px 8px; gap: 4px; margin-top: 1px; }
.aligngrid svg, .stack svg { width: 8px; height: 8px; }
.stack { display: grid; gap: 4px; margin-top: 7px; }
.ports .cmd { margin: 6px 0 4px 2px; align-self: flex-start; }
.portselect { width: 45px; align-self: flex-start; margin-left: 2px; }
.collapse { margin: auto 4px 2px auto; }
.collapse svg { width: 6px; height: 6px; }

/* Shared fields */
.select { position: relative; display: flex; min-width: 0; height: 11px; }
.select select { appearance: none; width: 100%; padding: 0 8px 0 2px; border: 1px solid #b2b2b2; border-radius: 2px; background: #f8f8f8; text-align-last: center; font-size: 6px; line-height: 8px; }
.select::after { content: ""; position: absolute; right: 3px; top: 4px; width: 4px; height: 2px; background: #333; clip-path: polygon(0 0, 100% 0, 50% 100%); }
.select.off select { border-color: #ddd; color: #b5b5b5; opacity: 1; }
.select.off::after { background: #bbb; }
.portselect select, .select.l select { text-align-last: left; }
.spin { display: flex; min-width: 0; height: 11px; border: 1px solid #b8b8b8; border-radius: 2px; background: #fff; }
.spin input { flex: 1; min-width: 0; padding-right: 2px; border-right: 1px solid #c8c8c8; text-align: right; font-family: "Liberation Sans", sans-serif; font-size: 6px; }
.spin svg { width: 10px; height: 9px; background: #f6f6f6; }
.spin.off { border-color: #e0e0e0; color: #b5b5b5; }
.spin.off input { border-color: #e8e8e8; }
.spin.off svg { opacity: 0.45; }
.search { display: flex; align-items: center; flex: 1; min-width: 0; height: 12px; border: 1px solid #b5b5b5; background: #fff; padding: 0 2px; }
.search input { flex: 1; min-width: 0; outline: 0; }
.search input::placeholder { color: #666; }
.search svg { width: 8px; height: 8px; }
.bar { width: 7px; flex: none; display: flex; flex-direction: column; align-items: center; gap: 3px; padding: 3px 0 1px; background: #f5f5f5; }
.up, .down { width: 5px; height: 4px; background: #666; clip-path: polygon(50% 0, 100% 100%, 0 100%); }
.down { margin-top: auto; clip-path: polygon(0 0, 100% 0, 50% 100%); }
.thumb { width: 4px; height: 86%; border-radius: 2px; background: #888; }
.thumb.long { height: auto; flex: 1; }

/* Main panels */
.main { flex: 1; min-height: 0; display: flex; background: #fff; }
.left { width: 162px; flex: none; display: flex; flex-direction: column; border-right: 1px solid #d0d0d0; }
.left h3, .right h3 { flex: none; display: flex; align-items: center; height: 12px; padding: 0 8px 0 4px; font-size: 7px; background: #fff; color: #222; }
.left h3 .caret { margin-right: 4px; color: #666; }
h3 svg { width: 2px; height: 6px; margin-left: auto; }
.tools { height: 214px; display: flex; flex-direction: column; border-bottom: 1px solid #ccc; }
.toolscroll { flex: 1; min-height: 0; display: flex; }
.toollist { flex: 1; min-width: 0; overflow: hidden; border-right: 1px solid #ddd; }
.searchrow { display: flex; align-items: center; height: 15px; padding: 0 3px 0 1px; gap: 2px; }
.view { width: 12px; height: 12px; border-radius: 2px; }
.view svg { width: 8px; height: 8px; }
.view.on { background: #dcdcdc; border: 1px solid #bbb; }
.left h4 { height: 11px; padding: 2px; background: #e5e5e5; font-weight: bold; line-height: 8px; color: #222; }
.palette { display: grid; grid-template-columns: repeat(auto-fill, 34px); grid-auto-rows: 32px; padding: 4px 0 0 1px; }
.draw { height: 101px; }
.palette button { flex-direction: column; justify-content: flex-start; align-self: start; line-height: 8px; }
.palette svg { width: 12px; height: 12px; margin-bottom: 1px; }
.browser { flex: 1; background: #f5f5f5; }
.browser .search { margin: 1px 2px 4px; }
.root { display: flex; align-items: center; height: 15px; padding: 0 3px; gap: 4px; background: #e5e5e5; font-weight: bold; }
.root span { flex: 1; margin-left: -2px; }
.root svg { width: 9px; height: 9px; }
.tree { list-style: none; font-weight: bold; color: #111; }
.tree li { display: flex; align-items: center; height: 13px; gap: 3px; padding-left: 27px; }
.tree .d1 { height: 23px; padding-left: 11px; }
.tree .d1 svg { width: 20px; height: 20px; }
.tree .d2 { padding-left: 20px; }
.tree .d3 { padding-left: 36px; }
.tree .selected { background: #bdbdbd; }

/* Canvas */
.center { flex: 1; min-width: 0; display: grid; grid-template: 11px 8px 1fr / 8px 1fr; background: #f5f5f5; }
.doctabs { grid-column: 1 / 3; display: flex; align-items: center; background: #fff; }
.doctabs > svg { width: 2px; height: 6px; margin: 0 3px; opacity: 0.6; }
.doctabs .more { margin-left: auto; margin-right: 8px; }
.doctab { height: 11px; gap: 3px; padding: 0 2px 0 4px; border-top: 1px solid #004073; background: #fff; font-family: "Liberation Sans", sans-serif; }
.x { width: 5px; height: 5px; }
.hruler, .vruler { font: 5px "Liberation Sans", sans-serif; fill: #333; background: #f5f5f5; }
.hruler { grid-column: 2; width: 100%; height: 8px; }
.vruler { width: 8px; height: 100%; min-height: 0; }
.edge { stroke: #666; stroke-width: 1; }
.workspace { position: relative; min-width: 0; min-height: 0; background: #d9d9d9; }
.drawing { position: absolute; inset: 0; width: 100%; height: 100%; }
.floatbar { position: absolute; left: 180px; top: 1px; display: flex; gap: 3px; padding: 1px; border: 1px solid #999; background: #fafafa; }
.floatbar button { width: 11px; height: 12px; border: 1px solid #c8c8c8; border-radius: 2px; }
.floatbar svg { width: 9px; height: 9px; }
.floatbar .on { background: #d9d9d9; border-color: #999; }

/* Properties */
.right { width: 161px; flex: none; display: flex; flex-direction: column; border-left: 1px solid #ccc; }
.right h3 { padding: 0 7px 0 3px; }
.propscroll { flex: 1; min-height: 0; display: flex; }
.props { flex: 1; min-width: 0; overflow: hidden; }
.props h4 { display: flex; align-items: center; gap: 4px; height: 14px; padding-left: 3px; border-bottom: 1px solid #ccc; background: #f5f5f5; }
.props h4.first { height: 12px; border-top: 1px solid #ccc; }
.props .transform + h4, .props .formatrows + h4 { height: 15px; border-top: 1px solid #ccc; }
.props h4.shut .caret { width: 2px; height: 4px; margin: 0 1px; clip-path: polygon(0 0, 100% 50%, 0 100%); }
.transform { display: grid; grid-template-columns: 7px 55px 7px 55px 14px; grid-auto-rows: 11px; gap: 2px; align-items: center; padding: 4px 3px 3px 6px; }
.transform label svg { width: 7px; height: 7px; }
.lock { height: 12px; border: 1px solid #ddd; border-radius: 2px; }
.lock svg { width: 8px; height: 8px; }
.flips { display: grid; grid-template-columns: 1fr 1fr; gap: 2px; height: 12px; }
.flips button { border: 1px solid #b8b8b8; border-radius: 2px; background: #f8f8f8; }
.flips svg { width: 8px; height: 8px; }
.formatrows { display: grid; grid-auto-rows: 1fr; height: 104px; padding: 2px 4px 2px 6px; }
.formatrows > div { display: grid; grid-template-columns: 39px repeat(4, 1fr); gap: 2px; align-items: center; }
.formatrows .select { grid-column: span 4; }
.formatrows .select.l, .formatrows .spin, .pick { grid-column: span 2; }
.pick, .half { height: 11px; padding: 0 2px; border: 1px solid #b2b2b2; border-radius: 2px; background: #f8f8f8; }
.pick:disabled, .half:disabled { border-color: #ddd; }
.pick .caret, .half .caret { margin-left: auto; }
.swatch { width: 26px; height: 8px; margin-left: 5px; border-radius: 2px; background: #a0a0a0; }
.swatch.white { background: #fafafa; border: 1px solid #e8e8e8; }
.rule { width: 24px; height: 1px; margin-left: 4px; background: #444; }
.dash { width: 4px; height: 1px; margin-left: 15px; background: #222; }
.pick svg, .half svg { width: 8px; height: 6px; }
.end svg { margin-left: 3px; color: #000; }
.flip { transform: scaleX(-1); }
.behavior { padding: 7px 3px 0 5px; }
.behavior p { height: 13px; color: #888; font-style: italic; white-space: nowrap; }
.behavior a { color: #1f72c4; }
.behavior > div { display: grid; grid-template-columns: 1fr 71px; align-items: center; height: 14px; }
.behavior > .short { height: 11px; }
.limit { display: flex; align-items: center; gap: 5px; }
.limit .spin { flex: 1; }
.limit > input { appearance: none; width: 7px; height: 7px; border: 1px solid #777; background: #fff; }
.limit > input:disabled { border-color: #ddd; }

/* Status bar */
.status { flex: none; height: 12px; display: flex; align-items: center; padding: 0 2px; background: #e6e6e6; border-top: 1px solid #d8d8d8; font-family: "Liberation Sans", sans-serif; }
.status svg { width: 6px; height: 6px; }
.zoomset { display: flex; align-items: center; gap: 5px; margin-left: auto; }
.zoomset svg { width: 9px; height: 9px; }
.zoomset output { color: #aaa; }
.bl { padding-left: 4px; border-left: 1px solid #ccc; }
.tail { margin-left: 159px; }
```
